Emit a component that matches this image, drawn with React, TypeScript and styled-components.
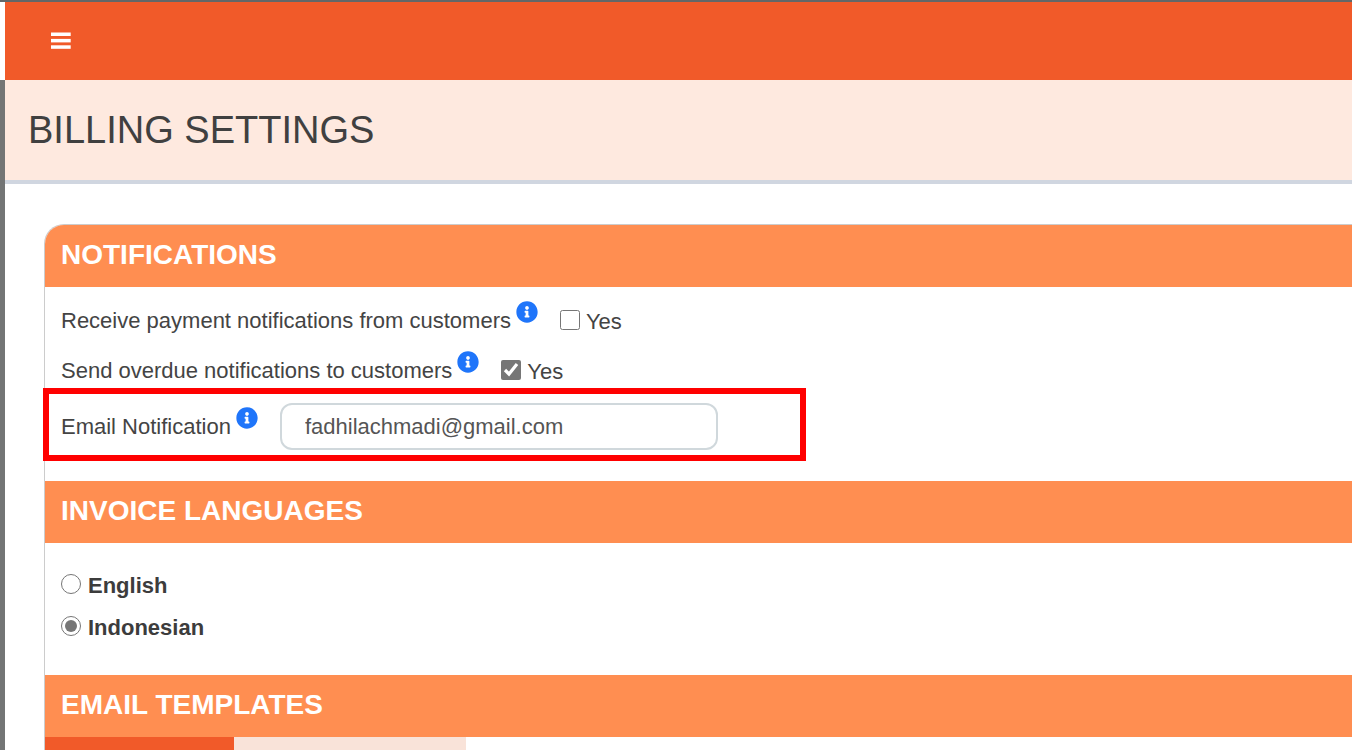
import React from "react";
import styled, { createGlobalStyle } from "styled-components";
import { FaInfoCircle } from "react-icons/fa";

const GlobalStyle = createGlobalStyle`
  *, *::before, *::after { box-sizing: border-box; }
  body {
    margin: 0;
    background: #ffffff;
    color: #444444;
    font-family: "Liberation Sans", Arial, sans-serif;
    font-size: 22px;
    line-height: 26px;
  }
`;

const Shell = styled.div`
  display: grid;
  grid-template-columns: 5px minmax(0, 1fr);
  min-height: 100vh;
  border-top: 2px solid #636768;
`;

const SidebarEdge = styled.aside`
  background: #737575;
`;

const SidebarLogoArea = styled.div`
  height: 78px;
  background: #ffffff;
`;

const Main = styled.main`
  display: flex;
  flex-direction: column;
`;

const TopBar = styled.header`
  display: flex;
  align-items: center;
  height: 78px;
  padding-left: 46px;
  background: #f15a29;
`;

const MenuButton = styled.button`
  display: flex;
  padding: 0;
  border: 0;
  background: none;
  color: #ffffff;
  cursor: pointer;
`;

const TitleBar = styled.div`
  padding: 28px 23px;
  border-bottom: 4px solid #d0d6e0;
  background: #fee9df;
`;

const PageTitle = styled.h1`
  margin: 0;
  color: #404040;
  font-size: 38px;
  font-weight: 400;
  line-height: 44px;
`;

const Card = styled.div`
  display: flex;
  flex: 1;
  flex-direction: column;
  margin: 40px 0 0 39px;
  border: solid #cccccc;
  border-width: 1px 0 0 1px;
  border-top-left-radius: 20px;
`;

const SectionTitle = styled.h2`
  margin: 0;
  padding: 14px 16px 16px;
  background: #ff8e51;
  color: #ffffff;
  font-size: 28px;
  font-weight: 700;
  line-height: 32px;

  &:first-child {
    border-top-left-radius: 19px;
  }
`;

const NotificationList = styled.div`
  padding: 8px 16px 24px;
`;

const SettingRow = styled.div<{ $tall?: boolean }>`
  position: relative;
  display: flex;
  align-items: center;
  height: ${({ $tall }) => ($tall ? 62 : 50)}px;
`;

const SettingName = styled.label`
  padding-top: 2px;
`;

const InfoMark = styled(FaInfoCircle)`
  flex: none;
  width: 22px;
  height: 22px;
  margin: 0 22px 16px 5px;
  color: #1f75fa;
`;

const Tick = styled.input`
  width: 20px;
  height: 20px;
  margin: 0 0 4px;
  accent-color: #767676;
`;

const TickLabel = styled.label`
  display: flex;
  align-items: center;
  gap: 6px;
  padding-top: 4px;
`;

const EmailInput = styled.input`
  width: 438px;
  height: 47px;
  padding: 2px 23px 0;
  border: 2px solid #d0d8dc;
  border-radius: 12px;
  background: #ffffff;
  color: #555555;
  font: inherit;
`;

const Highlight = styled.div`
  position: absolute;
  top: -7px;
  bottom: -4px;
  left: -18px;
  width: 763px;
  border: 6px solid #ff0000;
  pointer-events: none;
`;

const LanguageList = styled.div`
  padding: 20px 16px 28px;
`;

const LanguageOption = styled(TickLabel)`
  gap: 7px;
  height: 42px;
  color: #3c3c3c;
  font-weight: 700;
`;

const TabList = styled.div`
  display: flex;
  flex: 1;
  min-height: 12px;
`;

const Tab = styled.button<{ $active?: boolean }>`
  width: ${({ $active }) => ($active ? 189 : 232)}px;
  padding: 0;
  border: 0;
  background: ${({ $active }) => ($active ? "#f15a29" : "#f9e3d9")};
`;

function MenuIcon() {
  return (
    <svg width="20" height="18" viewBox="0 0 20 18" fill="currentColor" aria-hidden="true">
      <rect x="0" y="0.5" width="19.7" height="3.5" />
      <rect x="0" y="6.9" width="19.7" height="3.5" />
      <rect x="0" y="13.3" width="19.7" height="3.5" />
    </svg>
  );
}

function ToggleSetting({ id, label, checked }: { id: string; label: string; checked?: boolean }) {
  return (
    <SettingRow>
      <SettingName htmlFor={id}>{label}</SettingName>
      <InfoMark aria-hidden="true" />
      <TickLabel>
        <Tick id={id} type="checkbox" defaultChecked={checked} />
        Yes
      </TickLabel>
    </SettingRow>
  );
}

export default function App() {
  return (
    <>
      <GlobalStyle />
      <Shell>
        <SidebarEdge>
          <SidebarLogoArea />
        </SidebarEdge>
        <Main>
          <TopBar>
            <MenuButton type="button" aria-label="Menu">
              <MenuIcon />
            </MenuButton>
          </TopBar>
          <TitleBar>
            <PageTitle>BILLING SETTINGS</PageTitle>
          </TitleBar>
          <Card>
            <SectionTitle>NOTIFICATIONS</SectionTitle>
            <NotificationList>
              <ToggleSetting id="payment" label="Receive payment notifications from customers" />
              <ToggleSetting id="overdue" label="Send overdue notifications to customers" checked />
              <SettingRow $tall>
                <SettingName htmlFor="email">Email Notification</SettingName>
                <InfoMark aria-hidden="true" />
                <EmailInput id="email" type="email" defaultValue="fadhilachmadi@gmail.com" />
                <Highlight />
              </SettingRow>
            </NotificationList>
            <SectionTitle>INVOICE LANGUAGES</SectionTitle>
            <LanguageList>
              <LanguageOption>
                <Tick type="radio" name="language" />
                English
              </LanguageOption>
              <LanguageOption>
                <Tick type="radio" name="language" defaultChecked />
                Indonesian
              </LanguageOption>
            </LanguageList>
            <SectionTitle>EMAIL TEMPLATES</SectionTitle>
            <TabList>
              <Tab type="button" $active aria-label="First template" />
              <Tab type="button" aria-label="Second template" />
            </TabList>
          </Card>
        </Main>
      </Shell>
    </>
  );
}
